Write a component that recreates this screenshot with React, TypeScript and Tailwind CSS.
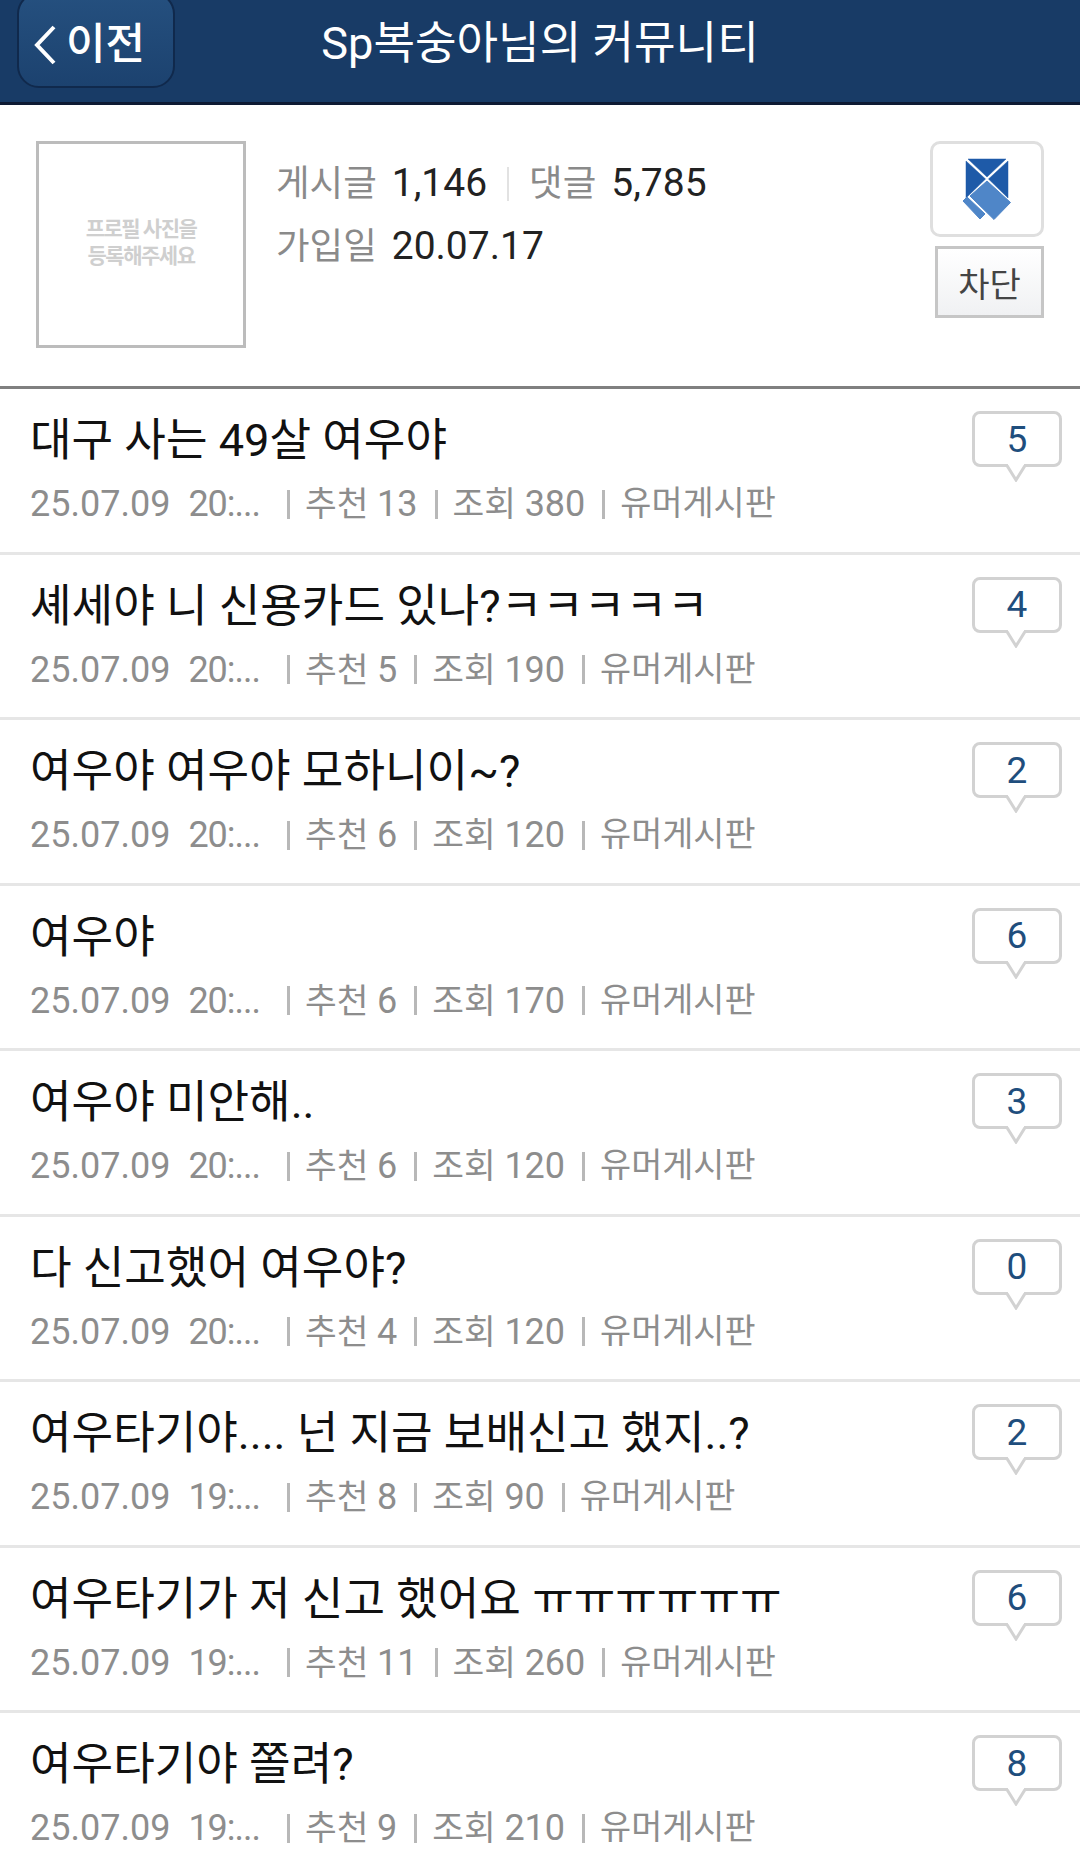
const rows = [
  { t: "대구 사는 49살 여우야", time: "20:...", rec: 13, view: 380, c: 5 },
  { t: "셰세야 니 신용카드 있나?ㅋㅋㅋㅋㅋ", time: "20:...", rec: 5, view: 190, c: 4 },
  { t: "여우야 여우야 모하니이~?", time: "20:...", rec: 6, view: 120, c: 2 },
  { t: "여우야", time: "20:...", rec: 6, view: 170, c: 6 },
  { t: "여우야 미안해..", time: "20:...", rec: 6, view: 120, c: 3 },
  { t: "다 신고했어 여우야?", time: "20:...", rec: 4, view: 120, c: 0 },
  { t: "여우타기야.... 넌 지금 보배신고 했지..?", time: "19:...", rec: 8, view: 90, c: 2 },
  { t: "여우타기가 저 신고 했어요 ㅠㅠㅠㅠㅠㅠ", time: "19:...", rec: 11, view: 260, c: 6 },
  { t: "여우타기야 쫄려?", time: "19:...", rec: 9, view: 210, c: 8 },
];

function Bubble({ n }: { n: number }) {
  return (
    <div className="relative w-[90px] h-[56px] mt-[22px] shrink-0">
      <div className="w-[90px] h-[56px] rounded-[8px] border-[3px] border-[#d2d2d2] bg-white flex items-center justify-center text-[37px] leading-none text-[#1f4e7d]">
        {n}
      </div>
      <svg className="absolute left-[33px] top-[53px]" width="22" height="18" viewBox="0 0 22 18">
        <path d="M1 0 L11 16 L21 0" fill="#fff" stroke="#d2d2d2" strokeWidth="3" />
        <rect x="3" y="0" width="16" height="1" fill="#fff" />
      </svg>
    </div>
  );
}

function Sep() {
  return <span className="inline-block w-[3px] h-[29px] bg-[#b8b8b8] ml-[17px] mr-[15px] shrink-0" />;
}

export default function App() {
  return (
    <div className="w-[1080px] h-[1869px] overflow-hidden bg-white font-['Roboto','Noto_Sans_CJK_KR',sans-serif]">
      <header className="relative h-[105px] bg-[#183b66] border-b-[3px] border-[#0e1a33] flex items-center justify-center">
        <button className="absolute left-[17px] top-[-8px] w-[158px] h-[96px] rounded-[22px] border-[2px] border-[#10294c] bg-gradient-to-b from-[#25507f] to-[#1c426f] flex items-center pl-[14px] pt-[9px] gap-[9px] text-white text-[43px] font-medium">
          <svg width="24" height="42" viewBox="0 0 24 42" fill="none">
            <path d="M21 3 L4 21 L21 39" stroke="#fff" strokeWidth="4" />
          </svg>
          <span className="leading-none">이전</span>
        </button>
        <h1 className="text-white text-[45.200px] leading-none font-normal -mt-[15px]">Sp복숭아님의 커뮤니티</h1>
      </header>

      <section className="h-[284px] border-b-[3px] border-[#808080] flex pl-[36px] pr-[36px] pt-[36px]">
        <div className="w-[210px] h-[207px] border-[3px] border-[#bcbcbc] flex flex-col items-center justify-center pb-[3px] text-[21px] leading-[27px] font-bold text-[#cfcfcf] tracking-[-1.5px] shrink-0">
          <span>프로필 사진을</span>
          <span>등록해주세요</span>
        </div>
        <div className="ml-[30px] flex-1 text-[36.500px] leading-[63px] pt-[11px]">
          <div className="flex items-center">
            <span className="text-[#8a8a8a] mr-[15px]">게시글</span>
            <span className="text-[#222] text-[39px]">1,146</span>
            <span className="inline-block w-[2px] h-[34px] bg-[#e2e2e2] mx-[20px]" />
            <span className="text-[#8a8a8a] mr-[15px]">댓글</span>
            <span className="text-[#222] text-[39px]">5,785</span>
          </div>
          <div className="flex items-center">
            <span className="text-[#8a8a8a] mr-[15px]">가입일</span>
            <span className="text-[#222] text-[39px]">20.07.17</span>
          </div>
        </div>
        <div className="flex flex-col items-end w-[114px] shrink-0">
          <div className="w-[114px] h-[96px] rounded-[10px] border-[3px] border-[#dfdfdf] flex items-center justify-center">
            <svg width="48" height="61" viewBox="0 0 48 61" strokeLinejoin="round" className="overflow-visible">
              <path d="M5 0 L43 0 L24 18 Z" fill="#1e5aa8" stroke="#1e5aa8" strokeWidth="0.500" />
              <path d="M3 2 L22.500 20 L3 39 Z" fill="#1e5aa8" stroke="#1e5aa8" strokeWidth="0.500" />
              <path d="M45 2 L25.500 20 L45 39 Z" fill="#1e5aa8" stroke="#1e5aa8" strokeWidth="0.500" />
              <path d="M24 22 L47.500 43.500 L31 60.500 L7 37 Z" fill="#4f86c8" stroke="#4f86c8" strokeWidth="1" />
              <path d="M0 42 L4 38 L22 55 L17 60 Z" fill="#4f86c8" stroke="#4f86c8" strokeWidth="1" />
            </svg>
          </div>
          <button className="mt-[9px] w-[109px] h-[72px] border-[3px] border-[#c6c6c6] bg-gradient-to-b from-white to-[#f0f1f3] pt-[5px] text-[34px] leading-none text-[#444]">
            차단
          </button>
        </div>
      </section>

      <ul>
        {rows.map((r, i) => (
          <li key={i} className="h-[165.500px] border-b-[3px] border-[#e6e6e6] flex pl-[30px] pr-[18px]">
            <div className="flex-1 min-w-0">
              <div className="mt-[24px] text-[45.200px] leading-[56px] text-[#111]">{r.t}</div>
              <div className="mt-[13px] flex items-center text-[34.500px] leading-[44px] text-[#8d8d8d]">
                <span className="text-[36px]">25.07.09</span>
                <span className="ml-[18px] mr-[10px] text-[36px] tracking-[-1px]">{r.time}</span>
                <Sep />
                <span>추천 <span className="text-[36px]">{r.rec}</span></span>
                <Sep />
                <span>조회 <span className="text-[36px]">{r.view}</span></span>
                <Sep />
                <span className="text-[33.800px]">유머게시판</span>
              </div>
            </div>
            <Bubble n={r.c} />
          </li>
        ))}
      </ul>
    </div>
  );
}
